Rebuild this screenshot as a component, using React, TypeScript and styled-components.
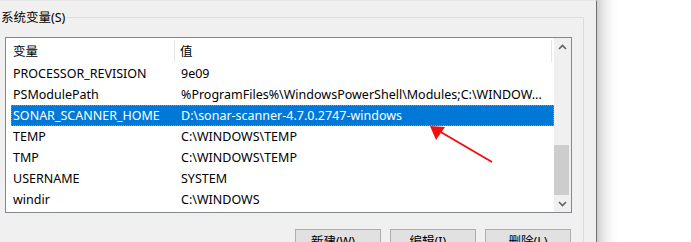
import styled, { createGlobalStyle } from "styled-components";

const GlobalStyle = createGlobalStyle`
  html, body {
    margin: 0;
    padding: 0;
    background: #ffffff;
  }
  body {
    font-family: "Noto Sans", "Noto Sans CJK SC", sans-serif;
    font-size: 12.5px;
    color: #000000;
  }
`;

const Page = styled.div`
  position: relative;
  width: 691px;
  height: 242px;
  display: flex;
  overflow: hidden;
`;

const Dialog = styled.div`
  width: 584px;
  padding-right: 12px;
  background: #f0f0f0;
  border-right: 1px solid #6f6f6f;
  border-top: 1px solid #e6e6e6;
`;

const Desktop = styled.div`
  flex: 1;
  background: linear-gradient(to right, #cfcfcf 0px, #ececec 8px, #fbfbfb 16px, #ffffff 22px);
`;

const GroupBox = styled.fieldset`
  margin: 8px 0 0 0;
  padding: 0;
  border: 1px solid #dcdcdc;
  border-left: none;
  border-bottom: none;
  height: 260px;
`;

const Legend = styled.legend`
  margin: 0;
  padding: 0 2px 0 1px;
  font-size: 12.5px;
  line-height: 17px;
`;

const ListBox = styled.div`
  margin: 11px 0 0 5px;
  width: 565px;
  height: 174px;
  border: 1px solid #828790;
  background: #ffffff;
  display: flex;
`;

const ListContent = styled.div`
  width: 548px;
  display: flex;
  flex-direction: column;
`;

const Header = styled.div`
  height: 25px;
  display: grid;
  grid-template-columns: 169px 377px;
  align-items: center;
`;

const HeaderCell = styled.div<{ $pad: number }>`
  height: 22px;
  margin-top: 1px;
  padding-left: ${(p) => p.$pad}px;
  display: flex;
  align-items: center;
  border-right: 1px solid #e5e5e5;
  line-height: 17px;
`;

const Row = styled.div<{ $selected?: boolean }>`
  height: 21px;
  margin-left: 5px;
  box-sizing: border-box;
  display: grid;
  grid-template-columns: 164px 1fr;
  align-items: center;
  white-space: nowrap;
  background: ${(p) => (p.$selected ? "#0078d7" : "transparent")};
  color: ${(p) => (p.$selected ? "#ffffff" : "#000000")};
  border: 1px dotted ${(p) => (p.$selected ? "#d9822b" : "transparent")};
`;

const NameCell = styled.span`
  padding-left: 1px;
  overflow: hidden;
`;

const ValueCell = styled.span`
  padding-left: 5px;
  overflow: hidden;
`;

const ScrollBar = styled.div`
  width: 17px;
  background: #f0f0f0;
  display: flex;
  flex-direction: column;
`;

const ScrollButton = styled.div`
  height: 17px;
  display: flex;
  align-items: center;
  justify-content: center;
`;

const Track = styled.div`
  flex: 1;
  display: flex;
  flex-direction: column;
  justify-content: flex-end;
`;

const Thumb = styled.div`
  height: 50px;
  width: 15px;
  background: #cdcdcd;
`;

const ButtonRow = styled.div`
  margin: 16px 0 0 0;
  width: 571px;
  display: flex;
  justify-content: flex-end;
  gap: 9px;
`;

const Button = styled.button`
  width: 86px;
  height: 23px;
  padding: 0;
  background: #e1e1e1;
  border: 1px solid #adadad;
  font-family: "Noto Sans", "Noto Sans CJK SC", sans-serif;
  font-size: 12.5px;
  color: #000000;
`;

const Arrow = styled.svg`
  position: absolute;
  left: 0;
  top: 0;
  pointer-events: none;
`;

const rows = [
  { name: "PROCESSOR_REVISION", value: "9e09" },
  { name: "PSModulePath", value: "%ProgramFiles%\\WindowsPowerShell\\Modules;C:\\WINDOW..." },
  { name: "SONAR_SCANNER_HOME", value: "D:\\sonar-scanner-4.7.0.2747-windows", selected: true },
  { name: "TEMP", value: "C:\\WINDOWS\\TEMP" },
  { name: "TMP", value: "C:\\WINDOWS\\TEMP" },
  { name: "USERNAME", value: "SYSTEM" },
  { name: "windir", value: "C:\\WINDOWS" },
];

const Chevron = ({ up }: { up?: boolean }) => (
  <svg width="9" height="6" viewBox="0 0 9 6">
    <polyline
      points={up ? "1,5 4.5,1.5 8,5" : "1,1 4.5,4.5 8,1"}
      fill="none"
      stroke="#606060"
      strokeWidth="1.6"
    />
  </svg>
);

export default function App() {
  return (
    <Page>
      <GlobalStyle />
      <Dialog>
        <GroupBox>
          <Legend>系统变量(S)</Legend>
          <ListBox>
            <ListContent>
              <Header>
                <HeaderCell $pad={7}>变量</HeaderCell>
                <HeaderCell $pad={5}>值</HeaderCell>
              </Header>
              {rows.map((r) => (
                <Row key={r.name} $selected={r.selected}>
                  <NameCell>{r.name}</NameCell>
                  <ValueCell>{r.value}</ValueCell>
                </Row>
              ))}
            </ListContent>
            <ScrollBar>
              <ScrollButton>
                <Chevron up />
              </ScrollButton>
              <Track>
                <Thumb />
              </Track>
              <ScrollButton>
                <Chevron />
              </ScrollButton>
            </ScrollBar>
          </ListBox>
          <ButtonRow>
            <Button>新建(W)...</Button>
            <Button>编辑(I)...</Button>
            <Button>删除(L)</Button>
          </ButtonRow>
        </GroupBox>
      </Dialog>
      <Desktop />
      <Arrow width="691" height="242" viewBox="0 0 691 242">
        <line x1="492" y1="162" x2="439" y2="131" stroke="#ee1111" strokeWidth="2" />
        <polygon points="430,126 445,127 436,140" fill="#ee1111" />
      </Arrow>
    </Page>
  );
}
